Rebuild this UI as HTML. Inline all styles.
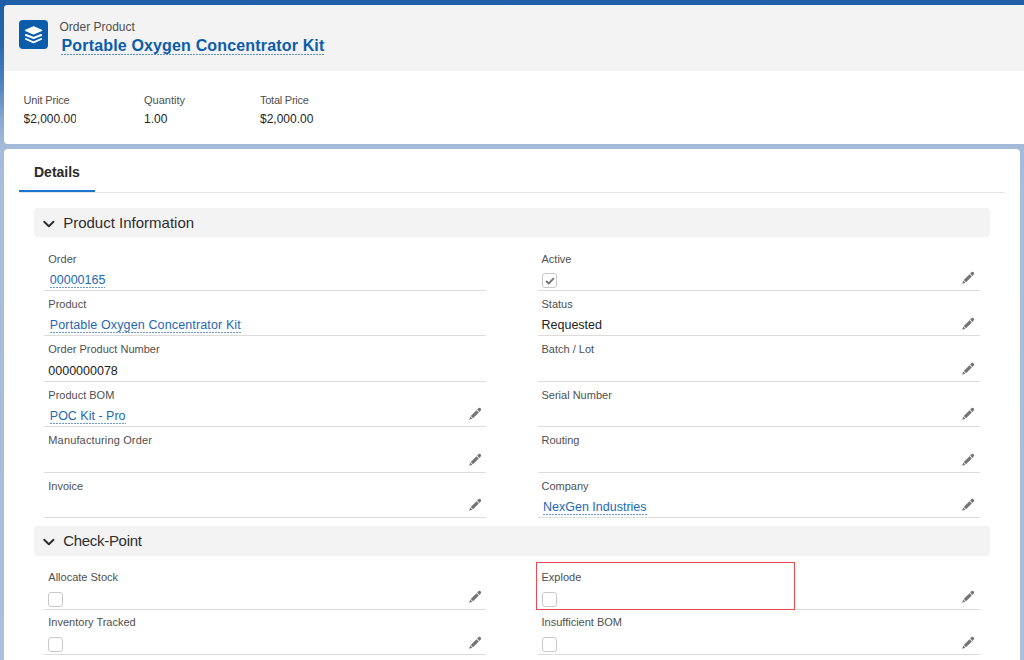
<!DOCTYPE html>
<html><head><meta charset="utf-8">
<style>
*{box-sizing:border-box;margin:0;padding:0}
html,body{width:1024px;height:660px;overflow:hidden}
body{font-family:"Liberation Sans",sans-serif;position:relative;
background:linear-gradient(to bottom,#1d5ea6 0px,#2566ad 40px,#4a7fbe 80px,#88a9d3 120px,#a4bbd9 146px,#a9bedb 200px,#abbfdc 660px);}
.abs{position:absolute}
.hdr{position:absolute;left:4px;top:5px;width:1030px;height:139px;border-radius:4px;background:#fff;overflow:hidden}
.hdr-top{position:absolute;left:0;top:0;right:0;height:66px;background:#f3f3f3}
.icon{position:absolute;left:14.8px;top:14.5px;width:29.4px;height:29.7px;border-radius:4px;background:#0b5cab}
.otype{position:absolute;left:55.5px;top:13.5px;font-size:12px;line-height:16px;color:#4f4f4f}
.title{position:absolute;left:57.5px;top:31px;font-size:16px;font-weight:700;letter-spacing:0.16px;line-height:20px;color:#0b5cab;white-space:nowrap}
.title .ul{position:absolute;left:-1px;right:-1px;top:18px;height:1px;background:repeating-linear-gradient(to right,#5d8fcf 0,#5d8fcf 2px,transparent 2px,transparent 3px)}
.hl{position:absolute;font-size:11px;line-height:14px;color:#4f4f4f;white-space:nowrap}
.hv{position:absolute;font-size:12px;line-height:16px;color:#252525;white-space:nowrap}
.card{position:absolute;left:4px;top:149px;width:1016px;height:600px;border-radius:4px;background:#fff}
.tab{position:absolute;left:30px;top:13px;font-size:14px;font-weight:700;line-height:20px;color:#2b2b2b}
.tabline{position:absolute;left:15px;top:43px;width:986px;height:1px;background:#e5e5e5}
.tabsel{position:absolute;left:15px;top:41px;width:76px;height:2px;background:#1b74d0}
.sec{position:absolute;left:34.2px;width:955.4px;height:29.5px;border-radius:4px;background:#f3f3f3}
.sec .chev{position:absolute;left:8.85px;top:12.15px}
.sec .st{position:absolute;left:29px;top:6px;font-size:15px;line-height:18px;color:#2e2e2e;white-space:nowrap}
.row{position:absolute;height:45.4px;border-bottom:1px solid #dcdcdc}
.row.l{left:40.3px;width:441.5px}
.row.r{left:533.5px;width:442.2px}
.lab{position:absolute;left:4px;top:6px;font-size:11px;line-height:14px;color:#4f4f4f;white-space:nowrap}
.val{position:absolute;left:4px;top:26.4px;font-size:12.5px;line-height:16px;color:#222;white-space:nowrap}
.val.link{left:5.5px;color:#1e68b5}
.val.link .u{position:absolute;left:0;right:0;top:15px;height:1px;background:repeating-linear-gradient(to right,#6b9ad3 0,#6b9ad3 2px,transparent 2px,transparent 3px)}
.pen{position:absolute;left:424.5px;top:25.5px}
.cb{position:absolute;left:4px;top:27.4px;width:15px;height:15px;border:1px solid #c9c9c9;border-radius:3px;background:#fff}
.redbox{position:absolute;left:536px;top:562.4px;width:259px;height:47.6px;border:1px solid #e84a53;box-shadow:0 0 0.6px rgba(232,74,83,0.5)}
</style></head>
<body>
<div class="hdr">
  <div class="hdr-top"></div>
  <div class="icon">
    <svg width="30" height="30" viewBox="0 0 30 30" style="position:absolute;left:0;top:0">
      <path d="M14.56 6.8 L22.6 10.4 L14.56 14.0 L6.5 10.4 Z" fill="#fff" stroke="#fff" stroke-width="1.3" stroke-linejoin="round"/>
      <path d="M6.9 15.0 L14.56 18.0 L22.2 15.0" fill="none" stroke="#fff" stroke-width="1.9" stroke-linecap="round" stroke-linejoin="round"/>
      <path d="M6.9 19.0 L14.56 22.4 L22.2 19.0" fill="none" stroke="#fff" stroke-width="1.9" stroke-linecap="round" stroke-linejoin="round"/>
    </svg>
  </div>
  <div class="otype">Order Product</div>
  <div class="title">Portable Oxygen Concentrator Kit<span class="ul"></span></div>

  <div class="hl" style="left:19.5px;top:88px;letter-spacing:-0.17px">Unit Price</div>
  <div class="hv" style="left:19.5px;top:106px;width:52.4px;overflow:hidden">$2,000.00</div>
  <div class="hl" style="left:140px;top:88px">Quantity</div>
  <div class="hv" style="left:140px;top:106px">1.00</div>
  <div class="hl" style="left:256px;top:88px;letter-spacing:-0.25px">Total Price</div>
  <div class="hv" style="left:256px;top:106px">$2,000.00</div>
</div>

<div class="card">
  <div class="tab">Details</div>
  <div class="tabline"></div>
  <div class="tabsel"></div>
</div>
<div class="sec" style="top:207.8px"><svg class="chev" width="12" height="9" viewBox="0 0 12 9"><path d="M1.2 1.8 L5.85 6.3 L10.5 1.8" fill="none" stroke="#2b2b2b" stroke-width="1.9" stroke-linecap="round" stroke-linejoin="round"/></svg><div class="st">Product Information</div></div>
<div class="row" style="left:44.3px;top:245.6px;width:441.5px"><div class="lab">Order</div><div class="val link">00000165<span class="u"></span></div></div>
<div class="row" style="left:537.5px;top:245.6px;width:442.2px"><div class="lab">Active</div><div class="cb"><svg width="13" height="13" viewBox="0 0 13 13" style="position:absolute;left:0;top:0"><path d="M3.0 7.0 L5.8 9.4 L10.9 4.2" fill="none" stroke="#747474" stroke-width="1.9"/></svg></div><svg class="pen" width="13" height="13" viewBox="0 0 13 13"><path d="M0.20 12.80 L1.19 9.55 L3.45 11.81 Z M1.76 8.98 L7.55 3.18 L9.82 5.45 L4.02 11.24 Z M8.12 2.62 L9.68 1.06 L10.89 0.86 L12.14 2.11 L11.94 3.32 L10.38 4.88 Z" fill="#747474"/></svg></div>
<div class="row" style="left:44.3px;top:291.0px;width:441.5px"><div class="lab">Product</div><div class="val link" style="letter-spacing:0.13px">Portable Oxygen Concentrator Kit<span class="u"></span></div></div>
<div class="row" style="left:537.5px;top:291.0px;width:442.2px"><div class="lab">Status</div><div class="val">Requested</div><svg class="pen" width="13" height="13" viewBox="0 0 13 13"><path d="M0.20 12.80 L1.19 9.55 L3.45 11.81 Z M1.76 8.98 L7.55 3.18 L9.82 5.45 L4.02 11.24 Z M8.12 2.62 L9.68 1.06 L10.89 0.86 L12.14 2.11 L11.94 3.32 L10.38 4.88 Z" fill="#747474"/></svg></div>
<div class="row" style="left:44.3px;top:336.4px;width:441.5px"><div class="lab">Order Product Number</div><div class="val">0000000078</div></div>
<div class="row" style="left:537.5px;top:336.4px;width:442.2px"><div class="lab">Batch / Lot</div><svg class="pen" width="13" height="13" viewBox="0 0 13 13"><path d="M0.20 12.80 L1.19 9.55 L3.45 11.81 Z M1.76 8.98 L7.55 3.18 L9.82 5.45 L4.02 11.24 Z M8.12 2.62 L9.68 1.06 L10.89 0.86 L12.14 2.11 L11.94 3.32 L10.38 4.88 Z" fill="#747474"/></svg></div>
<div class="row" style="left:44.3px;top:381.8px;width:441.5px"><div class="lab">Product BOM</div><div class="val link">POC Kit - Pro<span class="u"></span></div><svg class="pen" width="13" height="13" viewBox="0 0 13 13"><path d="M0.20 12.80 L1.19 9.55 L3.45 11.81 Z M1.76 8.98 L7.55 3.18 L9.82 5.45 L4.02 11.24 Z M8.12 2.62 L9.68 1.06 L10.89 0.86 L12.14 2.11 L11.94 3.32 L10.38 4.88 Z" fill="#747474"/></svg></div>
<div class="row" style="left:537.5px;top:381.8px;width:442.2px"><div class="lab">Serial Number</div><svg class="pen" width="13" height="13" viewBox="0 0 13 13"><path d="M0.20 12.80 L1.19 9.55 L3.45 11.81 Z M1.76 8.98 L7.55 3.18 L9.82 5.45 L4.02 11.24 Z M8.12 2.62 L9.68 1.06 L10.89 0.86 L12.14 2.11 L11.94 3.32 L10.38 4.88 Z" fill="#747474"/></svg></div>
<div class="row" style="left:44.3px;top:427.2px;width:441.5px"><div class="lab" style="letter-spacing:0.15px">Manufacturing Order</div><svg class="pen" width="13" height="13" viewBox="0 0 13 13"><path d="M0.20 12.80 L1.19 9.55 L3.45 11.81 Z M1.76 8.98 L7.55 3.18 L9.82 5.45 L4.02 11.24 Z M8.12 2.62 L9.68 1.06 L10.89 0.86 L12.14 2.11 L11.94 3.32 L10.38 4.88 Z" fill="#747474"/></svg></div>
<div class="row" style="left:537.5px;top:427.2px;width:442.2px"><div class="lab">Routing</div><svg class="pen" width="13" height="13" viewBox="0 0 13 13"><path d="M0.20 12.80 L1.19 9.55 L3.45 11.81 Z M1.76 8.98 L7.55 3.18 L9.82 5.45 L4.02 11.24 Z M8.12 2.62 L9.68 1.06 L10.89 0.86 L12.14 2.11 L11.94 3.32 L10.38 4.88 Z" fill="#747474"/></svg></div>
<div class="row" style="left:44.3px;top:472.6px;width:441.5px"><div class="lab">Invoice</div><svg class="pen" width="13" height="13" viewBox="0 0 13 13"><path d="M0.20 12.80 L1.19 9.55 L3.45 11.81 Z M1.76 8.98 L7.55 3.18 L9.82 5.45 L4.02 11.24 Z M8.12 2.62 L9.68 1.06 L10.89 0.86 L12.14 2.11 L11.94 3.32 L10.38 4.88 Z" fill="#747474"/></svg></div>
<div class="row" style="left:537.5px;top:472.6px;width:442.2px"><div class="lab">Company</div><div class="val link">NexGen Industries<span class="u"></span></div><svg class="pen" width="13" height="13" viewBox="0 0 13 13"><path d="M0.20 12.80 L1.19 9.55 L3.45 11.81 Z M1.76 8.98 L7.55 3.18 L9.82 5.45 L4.02 11.24 Z M8.12 2.62 L9.68 1.06 L10.89 0.86 L12.14 2.11 L11.94 3.32 L10.38 4.88 Z" fill="#747474"/></svg></div>
<div class="sec" style="top:526.2px"><svg class="chev" width="12" height="9" viewBox="0 0 12 9"><path d="M1.2 1.8 L5.85 6.3 L10.5 1.8" fill="none" stroke="#2b2b2b" stroke-width="1.9" stroke-linecap="round" stroke-linejoin="round"/></svg><div class="st" style="letter-spacing:-0.3px">Check-Point</div></div>
<div class="row" style="left:44.3px;top:564.6px;width:441.5px"><div class="lab" style="top:5.4px">Allocate Stock</div><div class="cb"></div><svg class="pen" width="13" height="13" viewBox="0 0 13 13"><path d="M0.20 12.80 L1.19 9.55 L3.45 11.81 Z M1.76 8.98 L7.55 3.18 L9.82 5.45 L4.02 11.24 Z M8.12 2.62 L9.68 1.06 L10.89 0.86 L12.14 2.11 L11.94 3.32 L10.38 4.88 Z" fill="#747474"/></svg></div>
<div class="row" style="left:537.5px;top:564.6px;width:442.2px"><div class="lab" style="top:5.4px">Explode</div><div class="cb"></div><svg class="pen" width="13" height="13" viewBox="0 0 13 13"><path d="M0.20 12.80 L1.19 9.55 L3.45 11.81 Z M1.76 8.98 L7.55 3.18 L9.82 5.45 L4.02 11.24 Z M8.12 2.62 L9.68 1.06 L10.89 0.86 L12.14 2.11 L11.94 3.32 L10.38 4.88 Z" fill="#747474"/></svg></div>
<div class="row" style="left:44.3px;top:610.0px;width:441.5px"><div class="lab" style="top:5.4px">Inventory Tracked</div><div class="cb"></div><svg class="pen" width="13" height="13" viewBox="0 0 13 13"><path d="M0.20 12.80 L1.19 9.55 L3.45 11.81 Z M1.76 8.98 L7.55 3.18 L9.82 5.45 L4.02 11.24 Z M8.12 2.62 L9.68 1.06 L10.89 0.86 L12.14 2.11 L11.94 3.32 L10.38 4.88 Z" fill="#747474"/></svg></div>
<div class="row" style="left:537.5px;top:610.0px;width:442.2px"><div class="lab" style="top:5.4px">Insufficient BOM</div><div class="cb"></div><svg class="pen" width="13" height="13" viewBox="0 0 13 13"><path d="M0.20 12.80 L1.19 9.55 L3.45 11.81 Z M1.76 8.98 L7.55 3.18 L9.82 5.45 L4.02 11.24 Z M8.12 2.62 L9.68 1.06 L10.89 0.86 L12.14 2.11 L11.94 3.32 L10.38 4.88 Z" fill="#747474"/></svg></div>

<div class="redbox"></div>
</body></html>
